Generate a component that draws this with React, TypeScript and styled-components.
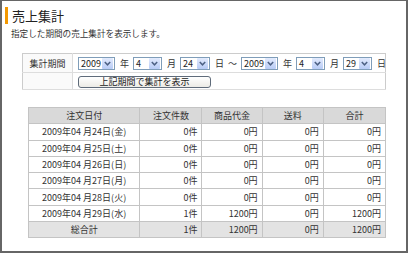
import { createGlobalStyle, styled } from 'styled-components';

const GlobalStyle = createGlobalStyle`
  html, body {
    margin: 0;
    padding: 0;
    background: #ffffff;
  }
  body {
    font-family: "Noto Sans CJK JP", "DejaVu Sans", sans-serif;
    color: #333333;
  }
`;

const Frame = styled.div`
  width: 408px;
  height: 253px;
  box-sizing: border-box;
  border: 2px solid #666666;
  border-top-width: 1px;
  background: #ffffff;
  display: flex;
  flex-direction: column;
  padding: 6px 0 0 3px;
`;

const Title = styled.h1`
  margin: 0;
  height: 17px;
  display: flex;
  align-items: center;
  border-left: 3px solid #f39800;
  padding-left: 4px;
  font-size: 13px;
  font-weight: normal;
  line-height: 17px;
  color: #222222;
`;

const Lead = styled.p`
  margin: 4px 0 0 6px;
  font-size: 8.6px;
  line-height: 10px;
  color: #333333;
`;

const FormBox = styled.table`
  margin: 15px 0 0 17px;
  width: 364px;
  border-collapse: collapse;
  border: 1px solid #cccccc;
  font-size: 9px;

  td {
    padding: 0;
  }
`;

const FormRow = styled.tr<{ $h: number }>`
  height: ${(p) => p.$h}px;
  border-bottom: 1px solid #dddddd;
`;

const LabelCell = styled.td`
  width: 61px;
  text-align: center;
  color: #333333;
  background: #fafafa;
  border-right: 1px solid #dddddd;
`;

const FieldCell = styled.td`
  padding-left: 3px !important;
`;

const Fields = styled.div`
  display: flex;
  align-items: center;
  gap: 5px;
  padding-left: 2px;
`;

const Unit = styled.span`
  font-size: 9px;
  color: #333333;
  margin-right: -1px;
`;

const SelectBox = styled.span<{ $w: number }>`
  display: inline-flex;
  align-items: center;
  justify-content: space-between;
  box-sizing: border-box;
  width: ${(p) => p.$w}px;
  height: 13px;
  border: 1px solid #7f9db9;
  background: #ffffff;
  padding: 0 1px 0 2px;
  font-size: 9px;
  color: #222222;
`;

const Arrow = styled.span`
  width: 11px;
  height: 11px;
  border-radius: 1px;
  background: linear-gradient(#e3ebfd, #b7cbf6);
  display: flex;
  align-items: center;
  justify-content: center;
`;

const SubmitButton = styled.button`
  margin-left: 2px;
  width: 133px;
  height: 12px;
  padding: 0;
  border: 1px solid #5f6b7a;
  border-radius: 3px;
  background: linear-gradient(#ffffff, #ecebe6);
  font-family: inherit;
  font-size: 9px;
  line-height: 10px;
  color: #222222;
`;

const DataTable = styled.table`
  margin: 17px 0 0 23px;
  width: 358px;
  border-collapse: collapse;
  border: 1px solid #aaaaaa;
  font-size: 9px;
  color: #333333;

  th, td {
    border: 1px solid #c4c4c4;
    height: 15.3px;
    padding: 0 4px;
    font-weight: normal;
  }

  th {
    background: #d9d9d9;
    text-align: center;
  }
`;

const Cell = styled.td<{ $align?: string }>`
  text-align: ${(p) => p.$align || 'right'};
`;

const TotalRow = styled.tr`
  td {
    background: #e3e3e3;
  }
`;

function Select({ value, width }: { value: string; width: number }) {
  return (
    <SelectBox $w={width}>
      <span>{value}</span>
      <Arrow>
        <svg width="7" height="5" viewBox="0 0 7 5">
          <path d="M0.8 1 L3.5 3.8 L6.2 1" fill="none" stroke="#4d6185" strokeWidth="1.5" />
        </svg>
      </Arrow>
    </SelectBox>
  );
}

const rows = [
  { date: '2009年04 月24日(金)', count: '0件', goods: '0円', ship: '0円', sum: '0円' },
  { date: '2009年04 月25日(土)', count: '0件', goods: '0円', ship: '0円', sum: '0円' },
  { date: '2009年04 月26日(日)', count: '0件', goods: '0円', ship: '0円', sum: '0円' },
  { date: '2009年04 月27日(月)', count: '0件', goods: '0円', ship: '0円', sum: '0円' },
  { date: '2009年04 月28日(火)', count: '0件', goods: '0円', ship: '0円', sum: '0円' },
  { date: '2009年04 月29日(水)', count: '1件', goods: '1200円', ship: '0円', sum: '1200円' },
];

export default function App() {
  return (
    <>
      <GlobalStyle />
      <Frame>
        <Title>売上集計</Title>
        <Lead>指定した期間の売上集計を表示します。</Lead>

        <FormBox>
          <tbody>
            <FormRow $h={19}>
              <LabelCell>集計期間</LabelCell>
              <FieldCell>
                <Fields>
                  <Select value="2009" width={37} />
                  <Unit>年</Unit>
                  <Select value="4" width={29} />
                  <Unit>月</Unit>
                  <Select value="24" width={30} />
                  <Unit>日</Unit>
                  <Unit>～</Unit>
                  <Select value="2009" width={37} />
                  <Unit>年</Unit>
                  <Select value="4" width={29} />
                  <Unit>月</Unit>
                  <Select value="29" width={29} />
                  <Unit>日</Unit>
                </Fields>
              </FieldCell>
            </FormRow>
            <FormRow $h={17}>
              <LabelCell />
              <FieldCell>
                <SubmitButton>上記期間で集計を表示</SubmitButton>
              </FieldCell>
            </FormRow>
          </tbody>
        </FormBox>

        <DataTable>
          <colgroup>
            <col style={{ width: 111 }} />
            <col style={{ width: 62 }} />
            <col style={{ width: 60 }} />
            <col style={{ width: 61 }} />
            <col style={{ width: 62 }} />
          </colgroup>
          <thead>
            <tr>
              <th>注文日付</th>
              <th>注文件数</th>
              <th>商品代金</th>
              <th>送料</th>
              <th>合計</th>
            </tr>
          </thead>
          <tbody>
            {rows.map((r) => (
              <tr key={r.date}>
                <Cell $align="center">{r.date}</Cell>
                <Cell>{r.count}</Cell>
                <Cell>{r.goods}</Cell>
                <Cell>{r.ship}</Cell>
                <Cell>{r.sum}</Cell>
              </tr>
            ))}
            <TotalRow>
              <Cell $align="center">総合計</Cell>
              <Cell>1件</Cell>
              <Cell>1200円</Cell>
              <Cell>0円</Cell>
              <Cell>1200円</Cell>
            </TotalRow>
          </tbody>
        </DataTable>
      </Frame>
    </>
  );
}
